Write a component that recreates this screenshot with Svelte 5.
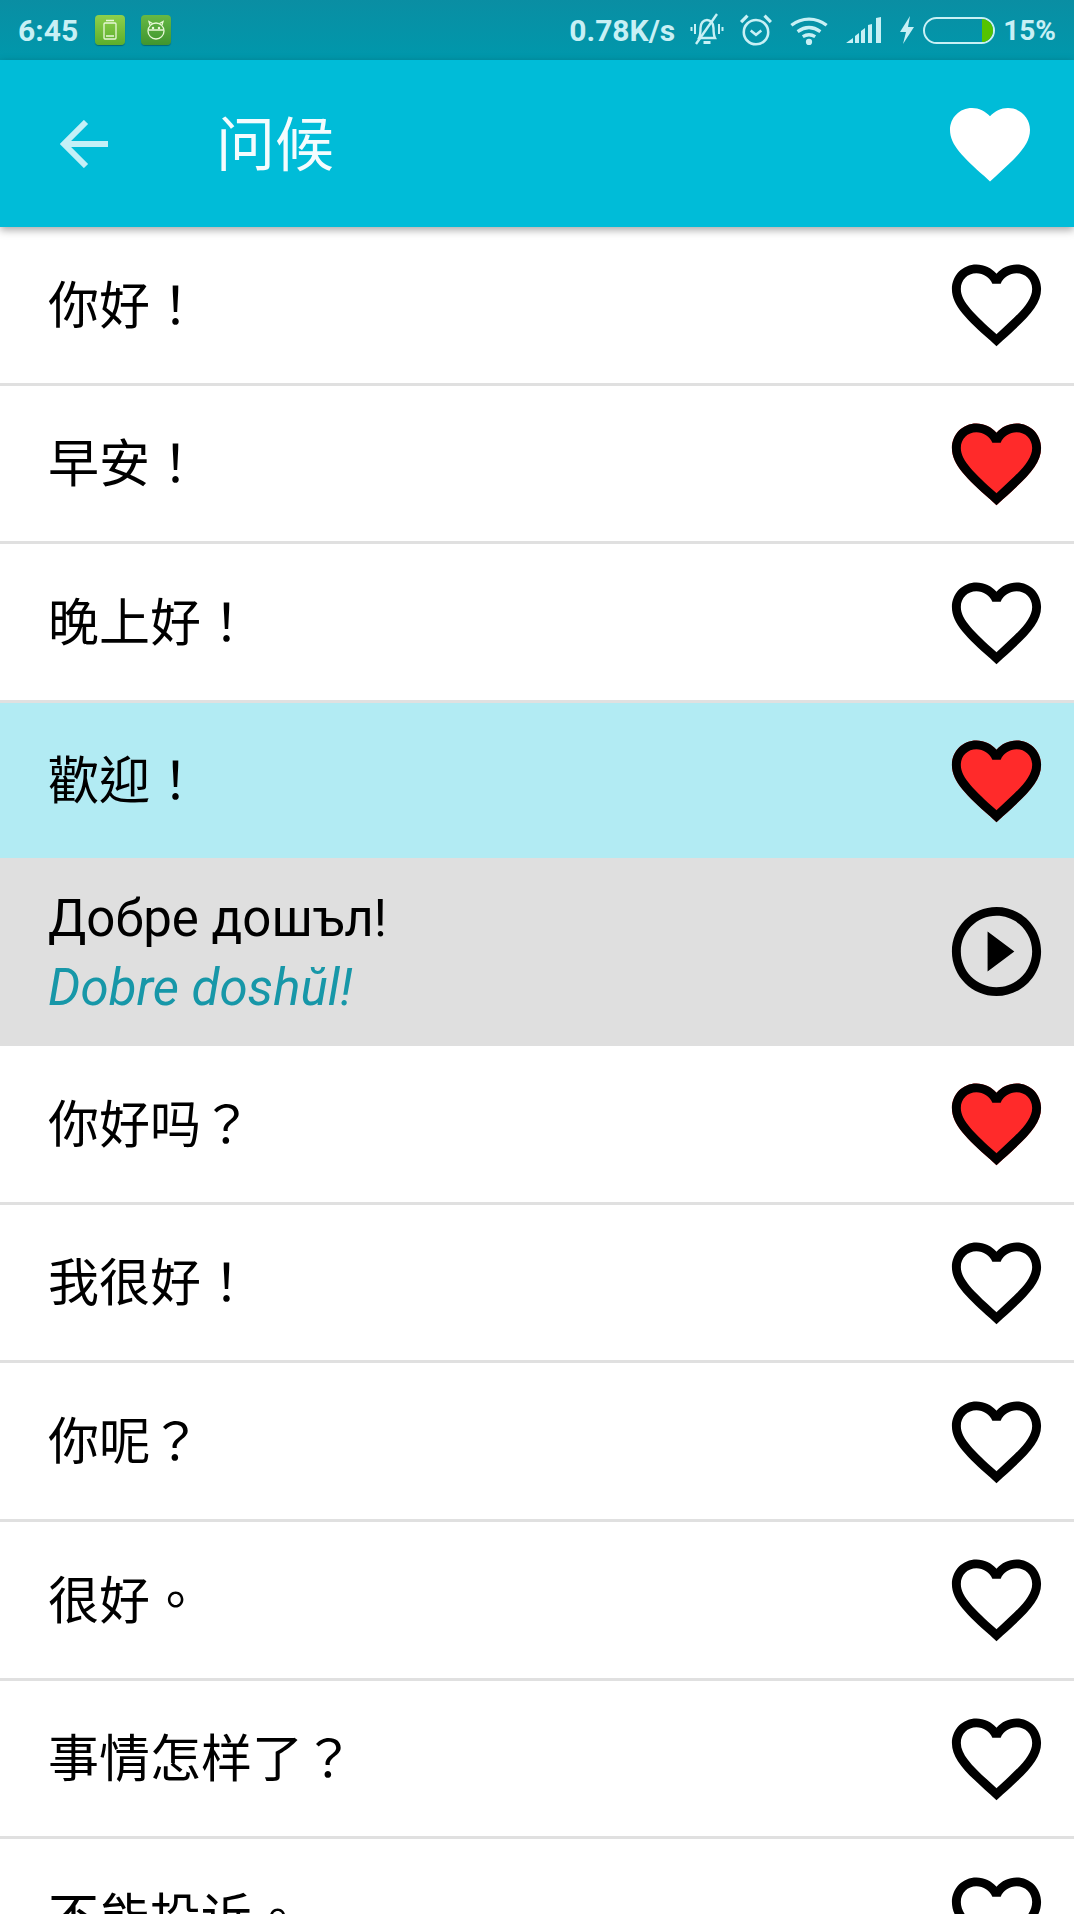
<script lang="ts">
  type Phrase = { text: string; liked?: boolean; tone?: 'active' };

  const heart =
    'M12 21.35l-1.45-1.32C5.4 15.36 2 12.28 2 8.5 2 5.42 4.42 3 7.5 3c1.74 0 3.41.81 4.5 2.09C13.09 3.81 14.76 3 16.5 3 19.58 3 22 5.42 22 8.5c0 3.78-3.4 6.86-8.55 11.54L12 21.35z';
  const heartBorder =
    'M16.5 3c-1.74 0-3.41.81-4.5 2.09C10.91 3.81 9.24 3 7.5 3 4.42 3 2 5.42 2 8.5c0 3.78 3.4 6.86 8.55 11.54L12 21.35l1.45-1.32C18.6 15.36 22 12.28 22 8.5 22 5.42 19.58 3 16.5 3zm-4.4 15.55l-.1.1-.1-.1C7.14 14.24 4 11.39 4 8.5 4 6.5 5.5 5 7.5 5c1.54 0 3.04.99 3.57 2.36h1.87C13.46 5.99 14.96 5 16.5 5c2 0 3.5 1.5 3.5 3.5 0 2.89-3.14 5.74-7.9 10.05z';

  const before: Phrase[] = [
    { text: '你好！' },
    { text: '早安！', liked: true },
    { text: '晚上好！' },
    { text: '歡迎！', liked: true, tone: 'active' },
  ];

  const after: Phrase[] = [
    { text: '你好吗？', liked: true },
    { text: '我很好！' },
    { text: '你呢？' },
    { text: '很好。' },
    { text: '事情怎样了？' },
    { text: '不能投诉。' },
  ];
</script>

{#snippet row(p: Phrase)}
  <div class="row" class:active={p.tone === 'active'}>
    <span class="text cjk">{p.text}</span>
    <svg class="icon" viewBox="0 0 24 24" aria-hidden="true">
      {#if p.liked}<path d={heart} fill="#ff2a2a" />{/if}
      <path d={heartBorder} fill="#000" />
    </svg>
  </div>
{/snippet}

<div class="screen">
  <div class="statusBar">
    <div class="group left">
      <span class="time">6:45</span>
      <span class="appIcon light">
        <svg viewBox="0 0 30 30" width="30" height="30" fill="none" stroke="#e8f8d8" stroke-width="1.3">
          <rect x="9" y="8" width="12" height="16" rx="1" />
          <path d="M11 21h8M11 5.500h8" />
        </svg>
      </span>
      <span class="appIcon dark">
        <svg viewBox="0 0 30 30" width="30" height="30" fill="none" stroke="#e8f8d8" stroke-width="1.3">
          <circle cx="15" cy="16" r="8" />
          <path d="M7.500 15h15M9 10L8 6.500l3.500 2M21 10l1-3.500-3.500 2" />
          <circle cx="12" cy="13" r=".6" fill="#e8f8d8" />
          <circle cx="18" cy="13" r=".6" fill="#e8f8d8" />
        </svg>
      </span>
    </div>
    <div class="group right">
      <span class="speed">0.78K/s</span>
      <svg class="bell" viewBox="0 0 34 34" width="34" height="34" fill="none" stroke="#c8f0f5" stroke-width="2.400">
        <path d="M9 25c1.500-3 1.500-6 1.500-10 0-5 3-8 6.500-8s6.500 3 6.500 8c0 4 0 7 1.500 10z" />
        <path d="M13.500 29.500h7" stroke-width="3" />
        <path d="M6 31L27 1" />
        <path d="M5 11v10M1.500 14v4M29 11v10M32.500 14v4" stroke-width="2" />
      </svg>
      <svg class="alarm" viewBox="0 0 32 32" width="34" height="34" fill="none" stroke="#c8f0f5" stroke-width="2.400">
        <circle cx="16" cy="18" r="11.500" />
        <path d="M11 16.500l5 4 5-4" />
        <path d="M2 8.500l6-6M30 8.500l-6-6" stroke-width="3" />
      </svg>
      <svg class="wifi" viewBox="0 0 38 28" width="40" height="29" fill="none" stroke="#c8f0f5" stroke-width="3.200">
        <path d="M2 9c10-8 24-8 34 0M8 15c7-5 15-5 22 0M13 20c4-2.500 8-2.500 12 0" />
        <circle cx="19" cy="25" r="3" fill="#c8f0f5" stroke="none" />
      </svg>
      <svg class="signal" viewBox="0 0 38 26" width="38" height="26" fill="#c8f0f5">
        <path d="M0 26l7-5v5zM9 19l4-3v10H9zM15 14l4-3v15h-4zM22 8l4-1v19h-4zM30 1l5-1v26h-5z" />
      </svg>
      <svg class="bolt" viewBox="0 0 16 28" width="16" height="28" fill="#c8f0f5">
        <path d="M11 0L1 16h6l-3 12 11-17H9z" />
      </svg>
      <span class="battery"><span class="charge"></span></span>
      <span class="percent">15%</span>
    </div>
  </div>

  <header class="toolbar">
    <svg class="back" viewBox="0 0 48 48" width="48" height="48" fill="none" stroke="#c5f0f7" stroke-width="6">
      <path d="M48 24H5M26 2L4 24l22 22" />
    </svg>
    <h1 class="title">问候</h1>
    <svg class="favorite" viewBox="0 0 24 24" aria-hidden="true"><path d={heart} fill="#fff" /></svg>
  </header>

  <div class="list">
    {#each before as p}
      {@render row(p)}
    {/each}

    <div class="row detail">
      <div class="lines">
        <span class="text">Добре дошъл!</span>
        <span class="roman">Dobre doshŭl!</span>
      </div>
      <svg class="icon" viewBox="0 0 24 24" aria-hidden="true">
        <path
          d="M10 16.500l6-4.500-6-4.500v9zM12 2C6.480 2 2 6.480 2 12s4.480 10 10 10 10-4.480 10-10S17.520 2 12 2zm0 18c-4.410 0-8-3.590-8-8s3.590-8 8-8 8 3.590 8 8-3.590 8-8 8z"
          fill="#000"
        />
      </svg>
    </div>

    {#each after as p}
      {@render row(p)}
    {/each}
  </div>
</div>

<style>
  :global(body) {
    margin: 0;
    background: #fff;
  }

  .screen {
    width: 1074px;
    height: 1914px;
    overflow: hidden;
    font-family: Roboto, "Noto Sans CJK TC", sans-serif;
  }

  .statusBar {
    height: 60px;
    box-sizing: border-box;
    padding: 0 18px;
    display: flex;
    align-items: center;
    justify-content: space-between;
    background: linear-gradient(#0a8ea3, #0098ac);
    color: #c8f0f5;
    font-size: 28px;
    font-weight: 700;
  }

  .group {
    display: flex;
    align-items: center;
  }

  .left {
    gap: 16px;
  }

  .appIcon {
    width: 30px;
    height: 30px;
    border-radius: 4px;
    box-shadow: 0 1px 1px rgba(0, 0, 0, 0.3);
  }

  .appIcon.light {
    background: linear-gradient(#8ed04c, #5cae2c);
  }

  .appIcon.dark {
    background: linear-gradient(#66b844, #3f9530);
  }

  .appIcon svg {
    display: block;
  }

  .speed {
    font-size: 30px;
  }

  .time {
    font-size: 30px;
    margin-right: 1px;
  }

  .bell {
    margin-left: 15px;
  }

  .alarm {
    margin-left: 15px;
  }

  .wifi {
    margin-left: 16px;
  }

  .signal {
    margin-left: 17px;
  }

  .bolt {
    margin-left: 15px;
  }

  .battery {
    width: 72px;
    height: 27px;
    margin-left: 8px;
    box-sizing: border-box;
    border: 2px solid #c8f0f5;
    border-radius: 14px;
    overflow: hidden;
    display: flex;
    justify-content: flex-end;
  }

  .charge {
    width: 11px;
    background: #55c300;
  }

  .percent {
    margin-left: 8px;
  }

  .toolbar {
    position: relative;
    height: 167px;
    box-sizing: border-box;
    padding: 0 36px 0 60px;
    display: flex;
    align-items: center;
    background: #00bcd8;
    box-shadow: 0 3px 8px rgba(0, 0, 0, 0.35);
  }

  .back {
    flex: none;
  }

  .title {
    margin: -7px 0 0 108px;
    font-size: 59px;
    font-weight: 400;
    color: #f4fcfe;
    flex: 1;
    font-family: "Noto Sans CJK SC", sans-serif;
  }

  .favorite {
    width: 96px;
    height: 96px;
    flex: none;
  }

  .list {
    display: flex;
    flex-direction: column;
  }

  .row {
    height: 158.670px;
    flex: none;
    box-sizing: border-box;
    padding: 0 24px 0 48px;
    display: flex;
    align-items: center;
    justify-content: space-between;
    background: #fff;
    border-bottom: 3px solid #e0e0e0;
  }

  .row.active {
    height: 155px;
    background: #b2ebf3;
    border-bottom: 0;
  }

  .row.detail {
    height: 188px;
    background: #dfdfdf;
    border-bottom: 0;
  }

  .text {
    font-size: 51px;
    line-height: 66px;
    color: #000;
  }

  .text.cjk {
    padding-bottom: 6px;
    font-family: "Noto Sans CJK TC", sans-serif;
  }

  .lines {
    display: flex;
    flex-direction: column;
    padding-top: 6px;
  }

  .roman {
    font-size: 51px;
    line-height: 72px;
    font-style: italic;
    color: #1797a8;
  }

  .icon {
    width: 107px;
    height: 107px;
    flex: none;
  }
</style>
